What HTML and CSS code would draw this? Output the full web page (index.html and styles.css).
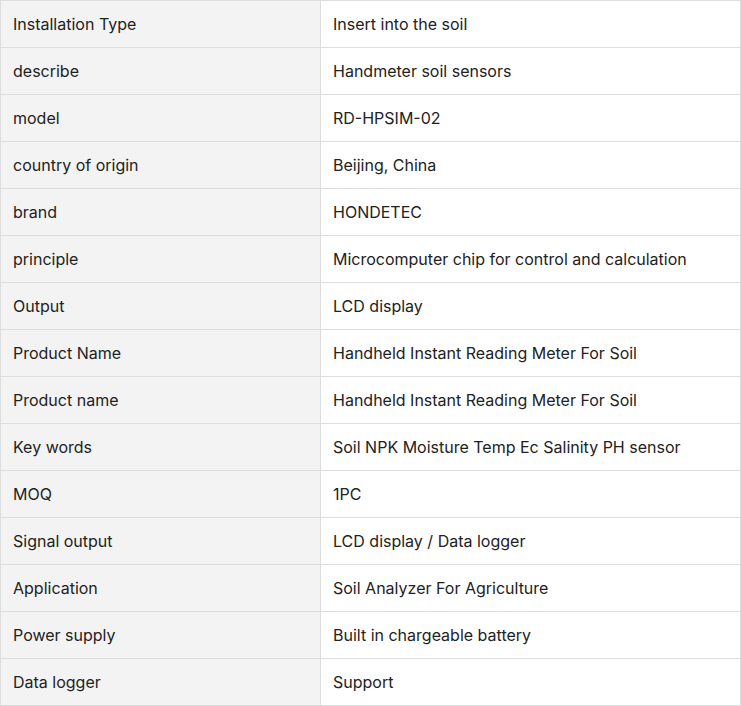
FILE: index.html
```html
<!DOCTYPE html>
<html lang="en">
<head>
<meta charset="utf-8">
<title>Product specifications</title>
<link rel="stylesheet" href="styles.css">
</head>
<body>
<table class="spec">
  <colgroup><col class="spec-key-col"><col class="spec-val-col"></colgroup>
  <tbody>
    <tr><td class="key">Installation Type</td><td class="val">Insert into the soil</td></tr>
    <tr><td class="key">describe</td><td class="val">Handmeter soil sensors</td></tr>
    <tr><td class="key">model</td><td class="val">RD-HPSIM-02</td></tr>
    <tr><td class="key">country of origin</td><td class="val">Beijing, China</td></tr>
    <tr><td class="key">brand</td><td class="val">HONDETEC</td></tr>
    <tr><td class="key">principle</td><td class="val">Microcomputer chip for control and calculation</td></tr>
    <tr><td class="key">Output</td><td class="val">LCD display</td></tr>
    <tr><td class="key">Product Name</td><td class="val">Handheld Instant Reading Meter For Soil</td></tr>
    <tr><td class="key">Product name</td><td class="val">Handheld Instant Reading Meter For Soil</td></tr>
    <tr><td class="key">Key words</td><td class="val">Soil NPK Moisture Temp Ec Salinity PH sensor</td></tr>
    <tr><td class="key">MOQ</td><td class="val">1PC</td></tr>
    <tr><td class="key">Signal output</td><td class="val">LCD display / Data logger</td></tr>
    <tr><td class="key">Application</td><td class="val">Soil Analyzer For Agriculture</td></tr>
    <tr><td class="key">Power supply</td><td class="val">Built in chargeable battery</td></tr>
    <tr><td class="key">Data logger</td><td class="val">Support</td></tr>
  </tbody>
</table>
</body>
</html>
```
FILE: styles.css
```css
html, body {
  margin: 0;
  padding: 0;
  background: #ffffff;
}
.spec {
  width: 741px;
  border-collapse: collapse;
  table-layout: fixed;
  font-family: Inter, "Noto Sans", sans-serif;
  font-size: 16px;
  color: #222222;
}
.spec-key-col {
  width: 320px;
}
.spec td {
  border: 1px solid #dddddd;
  height: 47px;
  padding: 0 12px;
  box-sizing: border-box;
  vertical-align: middle;
  line-height: 20px;
}
.spec .key {
  background: #f3f3f3;
}
.spec .val {
  background: #ffffff;
}
```
